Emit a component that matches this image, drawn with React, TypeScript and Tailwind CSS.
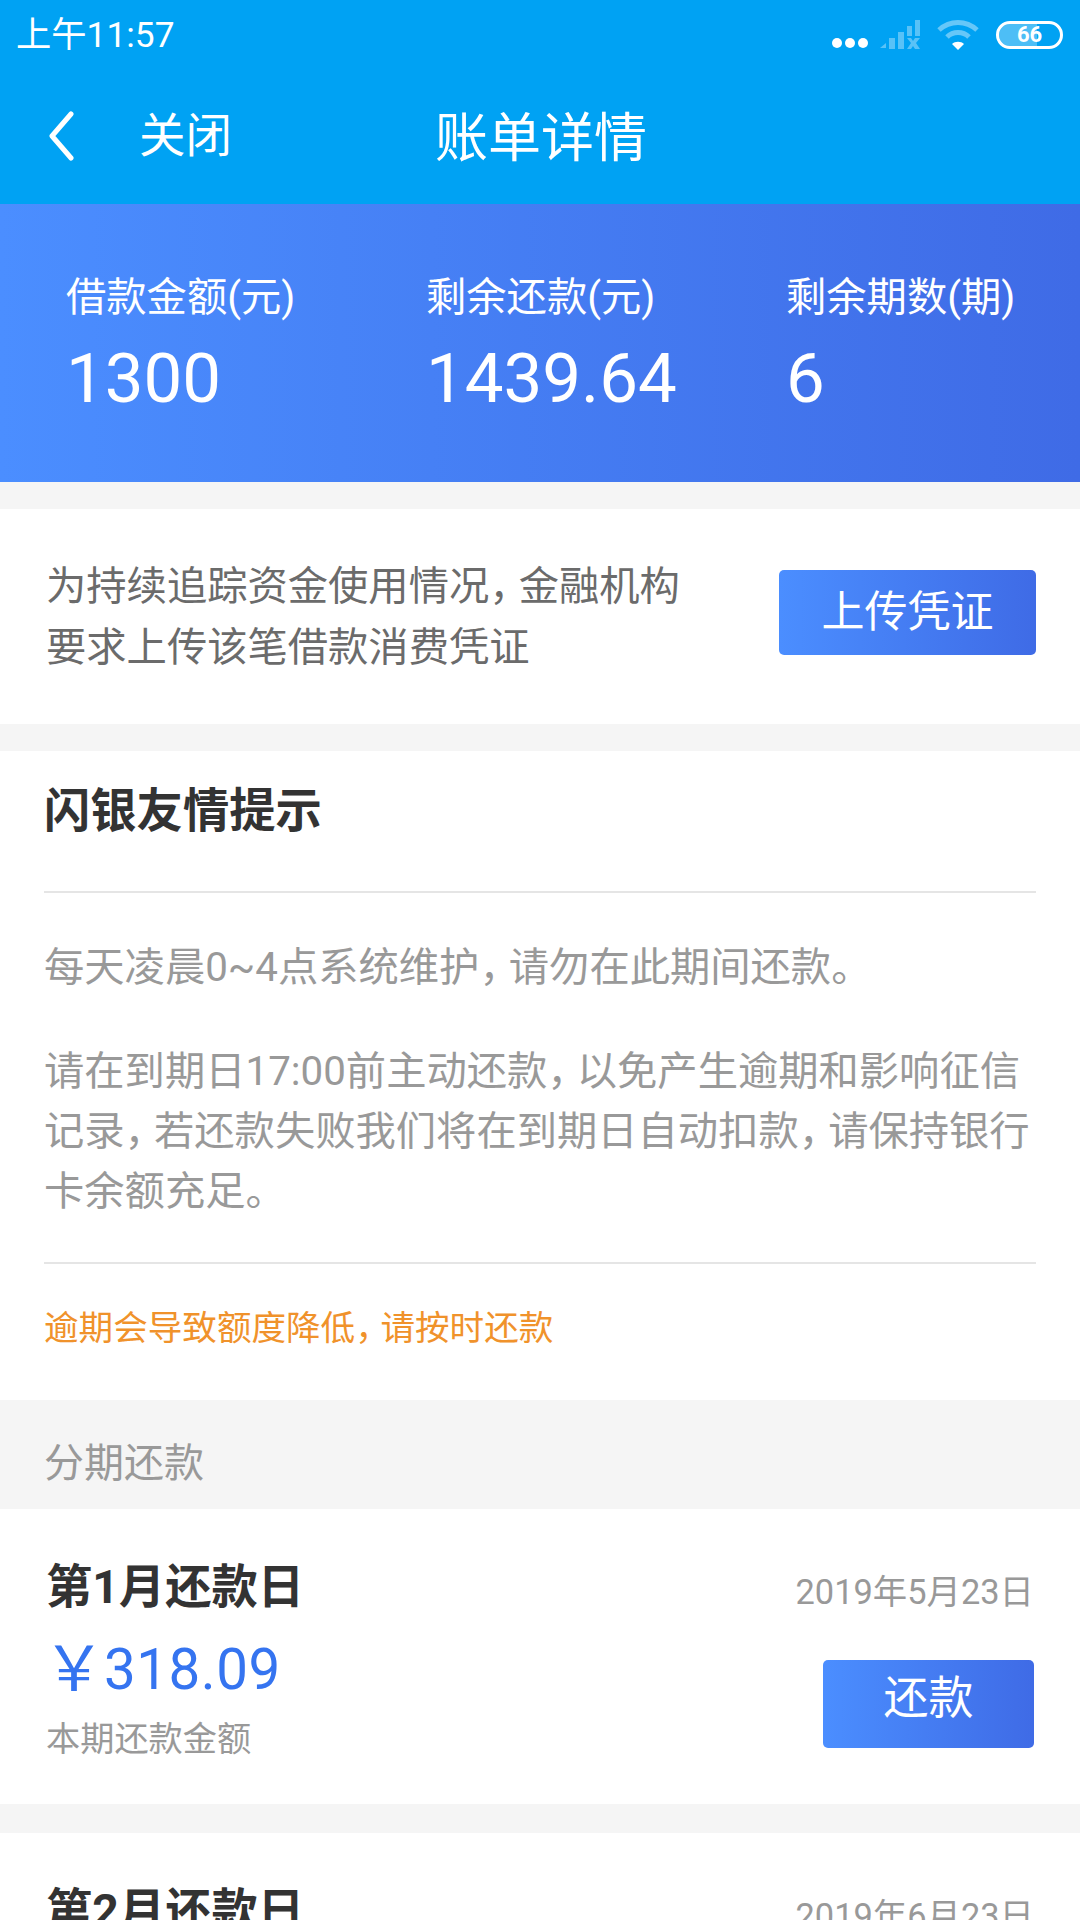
const cjk = "font-['Roboto','Noto_Sans_CJK_SC',sans-serif]"

const StatusIcons = () => (
  <div className="flex items-center">
    <svg width="36" height="12" viewBox="0 0 36 12" className="mt-[15px]">
      <circle cx="5" cy="6" r="5" fill="#fff" />
      <circle cx="18" cy="6" r="5" fill="#fff" />
      <circle cx="31" cy="6" r="5" fill="#fff" />
    </svg>
    <svg width="42" height="32" viewBox="0 0 42 32" className="ml-[11px]" fill="#fff" fillOpacity="0.35">
      <path d="M1 29 L7 24 V29 Z" />
      <rect x="10" y="19" width="6" height="11" />
      <rect x="19" y="13" width="6" height="17" />
      <rect x="28" y="7" width="5" height="10" />
      <rect x="36" y="1" width="5" height="16" />
      <path d="M28 19h4l2 3 2-3h5l-4 5 4 6h-5l-2-3-2 3h-4l4-6z" />
    </svg>
    <svg width="44" height="32" viewBox="0 0 44 32" className="ml-[15px]" fill="none" stroke="#fff" strokeOpacity="0.4" strokeWidth="5">
      <path d="M3 11 C14 1 30 1 41 11" />
      <path d="M11 18 C17 12 27 12 33 18" />
      <path d="M16 25 C19 22 25 22 28 25 L22 31 Z" fill="#fff" fillOpacity="1" stroke="none" />
    </svg>
    <div className="relative ml-[16px] w-[67px] h-[28px] rounded-full border-[3px] border-white overflow-hidden">
      <div className="absolute left-0 top-0 h-full w-[63%] bg-white/30" />
      <div className="absolute inset-0 flex items-center justify-center font-['Roboto',sans-serif] font-bold text-[22px] leading-none text-white">66</div>
    </div>
  </div>
)

// the comma in the reference is narrower than a full CJK cell
const Comma = () => <span className="tracking-[-0.27em]">，</span>

const Stat = ({ label, value, w }: { label: string; value: string; w: string }) => (
  <div className={`${w} shrink-0`}>
    <div className="text-[40.3px] leading-[56px] whitespace-nowrap">{label}</div>
    <div className="mt-[13px] text-[69px] leading-[80px] font-['Roboto',sans-serif]">{value}</div>
  </div>
)

const Gap = ({ h }: { h: string }) => <div className={`${h} bg-[#f5f5f5]`} />

const Bill = ({ month, date, amount }: { month: number; date: string; amount: string }) => (
  <div className="h-[295px] bg-white pl-[46px] pr-[46px] pt-[46px] flex justify-between">
    <div>
      <div className="text-[46.3px] leading-[64px] font-bold text-[#333]">第{month}月还款日</div>
      {amount && (
        <>
          <div className="mt-[18px] text-[56.5px] leading-[66px] text-[#3574f0] flex items-center font-['Roboto','Noto_Sans_CJK_SC',sans-serif]">
            <span className="-ml-[3px] text-[62px] leading-[60px]">￥</span>
            <span className="-ml-[1px] tracking-[0.5px]">{amount}</span>
          </div>
          <div className="mt-[12px] text-[34.2px] leading-[48px] text-[#999]">本期还款金额</div>
        </>
      )}
    </div>
    <div className="flex flex-col items-end pt-[14px]">
      <div className="text-[34.4px] leading-[46px] text-[#999] font-['Roboto','Noto_Sans_CJK_SC',sans-serif]">{date}</div>
      {amount && (
        <div className="mt-[45px] w-[211px] h-[88px] rounded-[5px] bg-gradient-to-r from-[#4b8eff] to-[#3f6be6] text-white text-[45px] flex items-center justify-center pb-[10px]">
          还款
        </div>
      )}
    </div>
  </div>
)

export default function App() {
  return (
    <div className={`w-[1080px] h-[1920px] overflow-hidden bg-[#f5f5f5] ${cjk}`}>
      <div className="h-[204px] bg-[#00a2f3] text-white">
        <div className="h-[70px] pl-[16px] pr-[17px] flex items-center justify-between">
          <span className="mt-[2px] text-[35.3px] leading-none">上午11:57</span>
          <StatusIcons />
        </div>
        <div className="h-[134px] flex items-center pb-[2px]">
          <svg width="28" height="50" viewBox="0 0 28 50" className="ml-[47px]" fill="none" stroke="#fff" strokeWidth="5" strokeLinecap="round" strokeLinejoin="round">
            <path d="M24 3 L5 25 L24 47" />
          </svg>
          <span className="ml-[64px] mt-[2px] text-[46.5px]">关闭</span>
          <span className="ml-[203px] mt-[7px] text-[53px]">账单详情</span>
        </div>
      </div>

      <div className="h-[278px] bg-gradient-to-r from-[#4b8eff] to-[#3f6be6] text-white pl-[66px] pt-[66px] flex">
        <Stat label="借款金额(元)" value="1300" w="w-[360px]" />
        <Stat label="剩余还款(元)" value="1439.64" w="w-[360px]" />
        <Stat label="剩余期数(期)" value="6" w="w-[260px]" />
      </div>

      <Gap h="h-[27px]" />

      <div className="h-[215px] bg-white pl-[46px] pr-[44px] flex items-center justify-between">
        <div className="text-[40.3px] leading-[61px] text-[#6b6b6b]">
          <div>为持续追踪资金使用情况<Comma />金融机构</div>
          <div>要求上传该笔借款消费凭证</div>
        </div>
        <div className="mb-[8px] w-[257px] h-[85px] rounded-[5px] bg-gradient-to-r from-[#4b8eff] to-[#3f6be6] text-white text-[43px] flex items-center justify-center">
          上传凭证
        </div>
      </div>

      <Gap h="h-[27px]" />

      <div className="h-[649px] bg-white px-[44px]">
        <div className="h-[142px] flex items-center border-b-2 border-[#e5e5e5] pb-[18px]">
          <span className="text-[46.3px] font-bold text-[#333]">闪银友情提示</span>
        </div>
        <div className="h-[371px] border-b-2 border-[#e5e5e5] pt-[45px] text-[40.3px] leading-[60px] text-[#999] whitespace-nowrap">
          <div>每天凌晨0~4点系统维护<Comma />请勿在此期间还款。</div>
          <div className="mt-[44px]">请在到期日17:00前主动还款<Comma />以免产生逾期和影响征信</div>
          <div>记录<Comma />若还款失败我们将在到期日自动扣款<Comma />请保持银行</div>
          <div>卡余额充足。</div>
        </div>
        <div className="pt-[40px] text-[34.6px] leading-[48px] text-[#f0922b]">逾期会导致额度降低<Comma />请按时还款</div>
      </div>

      <div className="h-[109px] pl-[44px] pt-[36px] text-[40px] leading-[56px] text-[#999]">分期还款</div>

      <Bill month={1} date="2019年5月23日" amount="318.09" />
      <Gap h="h-[29px]" />
      <Bill month={2} date="2019年6月23日" amount="" />
    </div>
  )
}
